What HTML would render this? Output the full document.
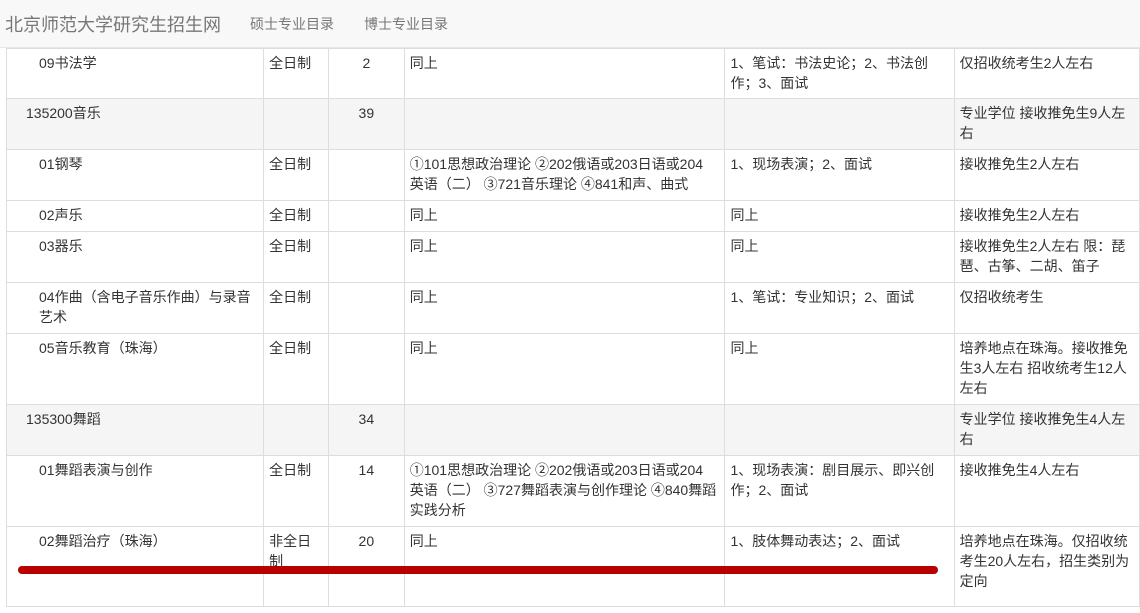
<!DOCTYPE html>
<html><head><meta charset="utf-8"><style>
*{margin:0;padding:0;box-sizing:border-box}
body{width:1140px;height:613px;overflow:hidden;background:#fff;font-family:"Liberation Sans","Noto Sans CJK SC",sans-serif;color:#333;font-size:14px;position:relative}
.nav{position:absolute;left:0;top:0;width:1140px;height:48px;background:#f8f8f8;border-bottom:1px solid #e7e7e7}
.brand{position:absolute;left:5px;top:11px;font-size:18px;color:#777}
.l1{position:absolute;left:250px;top:14px;color:#777}
.l2{position:absolute;left:364px;top:14px;color:#777}
table{position:absolute;left:6px;top:48px;border-collapse:collapse;table-layout:fixed}
td{border:1px solid #ddd;vertical-align:top;padding:4px 5px 0 5px;line-height:20px;overflow:hidden}
tr.g td{background:#f5f5f5}
.c{text-align:center}
.i1{padding-left:32px}
.i2{padding-left:19px}
.red{position:absolute;left:18px;top:566px;width:920px;height:8px;background:#b80000;border-radius:4px}
</style></head><body>
<div class="nav"><span class="brand">北京师范大学研究生招生网</span><span class="l1">硕士专业目录</span><span class="l2">博士专业目录</span></div>
<table>
<colgroup><col style="width:258px"><col style="width:65px"><col style="width:76px"><col style="width:322px"><col style="width:230px"><col style="width:186px"></colgroup>
<tr style="height:50px"><td class="i1">09书法学</td><td>全日制</td><td class="c">2</td><td>同上</td><td>1、笔试：书法史论；2、书法创作；3、面试</td><td>仅招收统考生2人左右</td></tr>
<tr class="g" style="height:51px"><td class="i2">135200音乐</td><td></td><td class="c">39</td><td></td><td></td><td>专业学位 接收推免生9人左右</td></tr>
<tr style="height:51px"><td class="i1">01钢琴</td><td>全日制</td><td></td><td>①101思想政治理论 ②202俄语或203日语或204<br>英语（二） ③721音乐理论 ④841和声、曲式</td><td>1、现场表演；2、面试</td><td>接收推免生2人左右</td></tr>
<tr style="height:31px"><td class="i1">02声乐</td><td>全日制</td><td></td><td>同上</td><td>同上</td><td>接收推免生2人左右</td></tr>
<tr style="height:51px"><td class="i1">03器乐</td><td>全日制</td><td></td><td>同上</td><td>同上</td><td>接收推免生2人左右 限：琵琶、古筝、二胡、笛子</td></tr>
<tr style="height:51px"><td class="i1">04作曲（含电子音乐作曲）与录音艺术</td><td>全日制</td><td></td><td>同上</td><td>1、笔试：专业知识；2、面试</td><td>仅招收统考生</td></tr>
<tr style="height:71px"><td class="i1">05音乐教育（珠海）</td><td>全日制</td><td></td><td>同上</td><td>同上</td><td>培养地点在珠海。接收推免生3人左右 招收统考生12人左右</td></tr>
<tr class="g" style="height:51px"><td class="i2">135300舞蹈</td><td></td><td class="c">34</td><td></td><td></td><td>专业学位 接收推免生4人左右</td></tr>
<tr style="height:71px"><td class="i1">01舞蹈表演与创作</td><td>全日制</td><td class="c">14</td><td>①101思想政治理论 ②202俄语或203日语或204<br>英语（二） ③727舞蹈表演与创作理论 ④840舞蹈<br>实践分析</td><td>1、现场表演：剧目展示、即兴创作；2、面试</td><td>接收推免生4人左右</td></tr>
<tr style="height:80px"><td class="i1">02舞蹈治疗（珠海）</td><td>非全日制</td><td class="c">20</td><td>同上</td><td>1、肢体舞动表达；2、面试</td><td>培养地点在珠海。仅招收统考生20人左右，招生类别为定向</td></tr>
</table>
<div class="red"></div>
</body></html>
